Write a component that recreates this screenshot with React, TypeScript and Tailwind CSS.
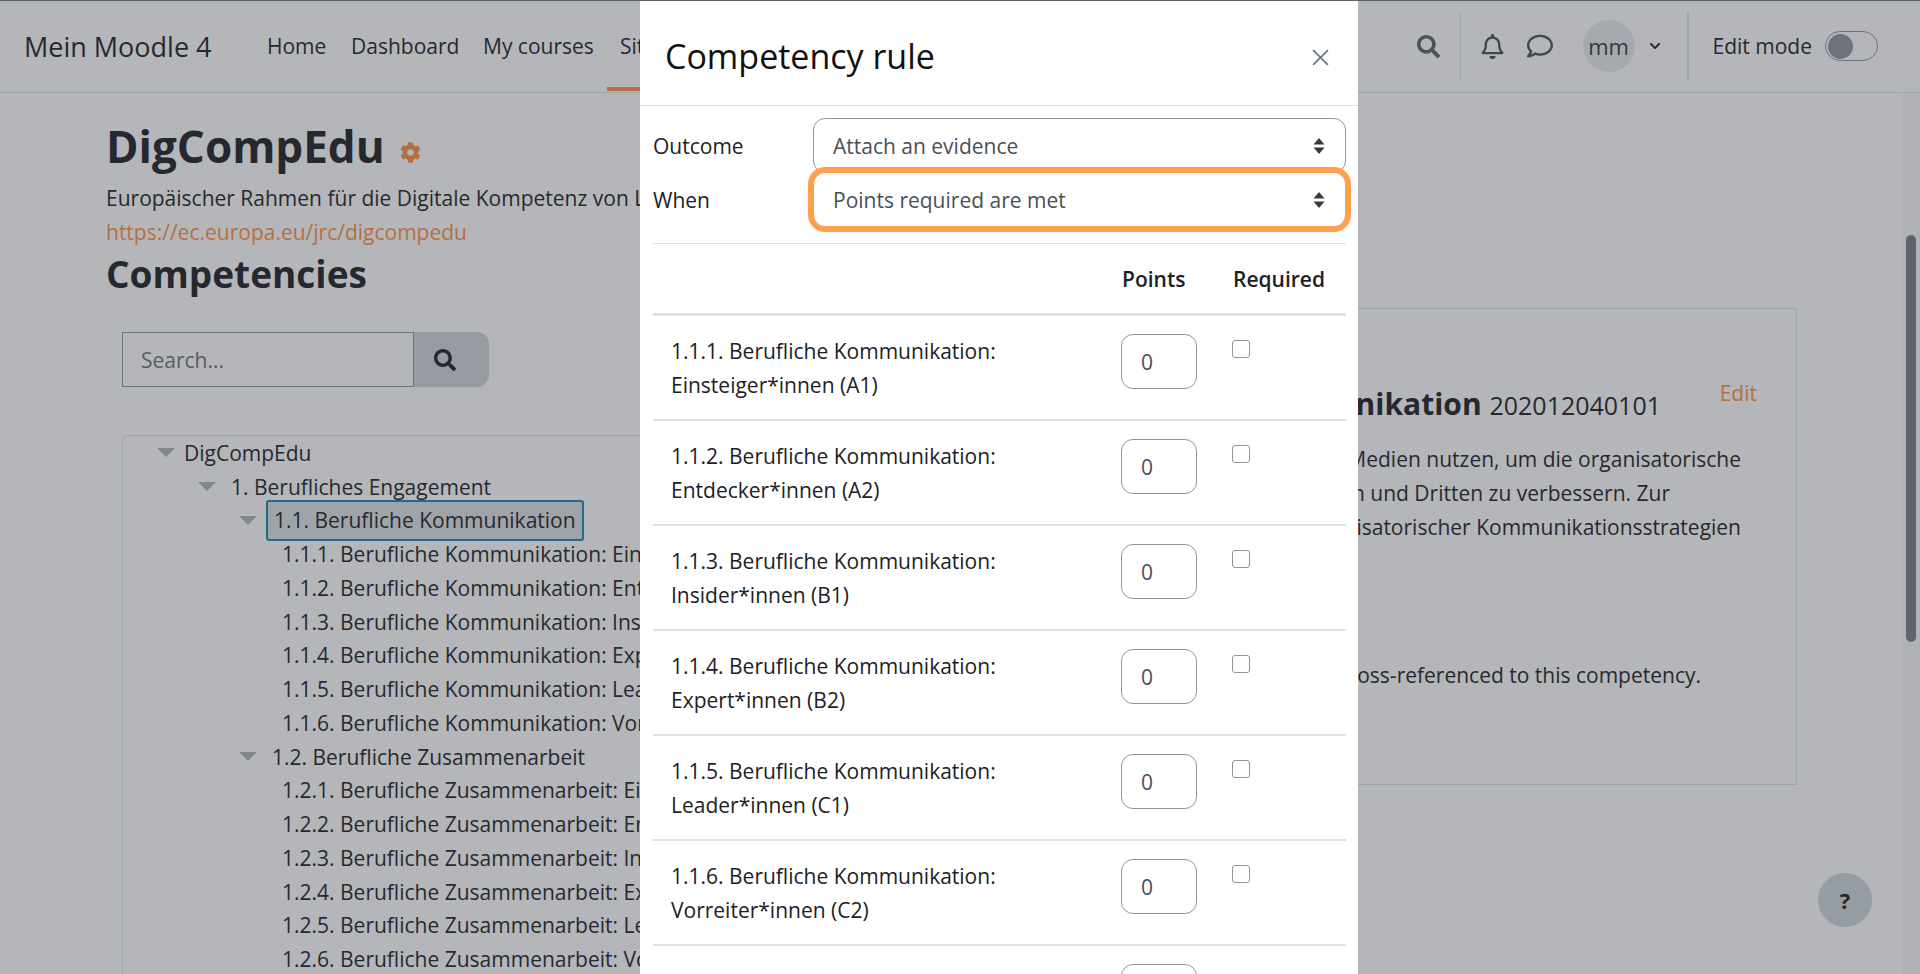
import React from 'react';
import { FaCog, FaSearch, FaRegBell, FaRegComment, FaChevronDown } from 'react-icons/fa';

const tree = [
  { label: 'DigCompEdu', arrow: 'ml-[34px]', text: 'ml-[9px]' },
  { label: '1. Berufliches Engagement', arrow: 'ml-[75px]', text: 'ml-[15px]' },
  { label: '1.1. Berufliche Kommunikation', arrow: 'ml-[116px]', text: 'ml-[9px]', selected: true },
  { label: '1.1.1. Berufliche Kommunikation: Einsteiger*innen (A1)', text: 'ml-[159px]' },
  { label: '1.1.2. Berufliche Kommunikation: Entdecker*innen (A2)', text: 'ml-[159px]' },
  { label: '1.1.3. Berufliche Kommunikation: Insider*innen (B1)', text: 'ml-[159px]' },
  { label: '1.1.4. Berufliche Kommunikation: Expert*innen (B2)', text: 'ml-[159px]' },
  { label: '1.1.5. Berufliche Kommunikation: Leader*innen (C1)', text: 'ml-[159px]' },
  { label: '1.1.6. Berufliche Kommunikation: Vorreiter*innen (C2)', text: 'ml-[159px]' },
  { label: '1.2. Berufliche Zusammenarbeit', arrow: 'ml-[116px]', text: 'ml-[15px]' },
  { label: '1.2.1. Berufliche Zusammenarbeit: Einsteiger*innen (A1)', text: 'ml-[159px]' },
  { label: '1.2.2. Berufliche Zusammenarbeit: Entdecker*innen (A2)', text: 'ml-[159px]' },
  { label: '1.2.3. Berufliche Zusammenarbeit: Insider*innen (B1)', text: 'ml-[159px]' },
  { label: '1.2.4. Berufliche Zusammenarbeit: Expert*innen (B2)', text: 'ml-[159px]' },
  { label: '1.2.5. Berufliche Zusammenarbeit: Leader*innen (C1)', text: 'ml-[159px]' },
  { label: '1.2.6. Berufliche Zusammenarbeit: Vorreiter*innen (C2)', text: 'ml-[159px]' },
];

const rules = [
  ['1.1.1. Berufliche Kommunikation:', 'Einsteiger*innen (A1)'],
  ['1.1.2. Berufliche Kommunikation:', 'Entdecker*innen (A2)'],
  ['1.1.3. Berufliche Kommunikation:', 'Insider*innen (B1)'],
  ['1.1.4. Berufliche Kommunikation:', 'Expert*innen (B2)'],
  ['1.1.5. Berufliche Kommunikation:', 'Leader*innen (C1)'],
  ['1.1.6. Berufliche Kommunikation:', 'Vorreiter*innen (C2)'],
  ['1.1.7. Berufliche Kommunikation:', 'Beispiel'],
];

function SelectArrows() {
  return (
    <svg width="12" height="18" viewBox="0 0 12 18" className="fill-[#343a40]">
      <path d="M6 1 L11.5 7.5 L0.5 7.5 Z" />
      <path d="M6 17 L11.5 10.5 L0.5 10.5 Z" />
    </svg>
  );
}

function FakeSelect({ value, focused }: { value: string; focused?: boolean }) {
  return (
    <div
      className={`flex items-center justify-between h-[55px] w-[533px] pl-[19px] pr-[20px] bg-white rounded-[12px] border text-[#495057] ${
        focused ? 'relative z-10 border-[#ffa04d] ring-[5px] ring-[#ffa04d]' : 'border-[#8f959e]'
      }`}
    >
      <span>{value}</span>
      <SelectArrows />
    </div>
  );
}

function Page() {
  return (
    <div className="h-[974px] overflow-hidden bg-white text-[#1d2125]">
      <nav className="flex items-center h-[93px] border-b border-[#dee2e6]">
        <span className="ml-[24px] w-[243px] text-[27px] leading-none">Mein Moodle 4</span>
        <span className="w-[84px]">Home</span>
        <span className="w-[132px]">Dashboard</span>
        <span className="w-[124px]">My courses</span>
        <span className="self-start h-[91px] flex items-center pt-[4px] px-[13px] border-b-[4px] border-[#ff9147] whitespace-nowrap">
          Site administration
        </span>
        <div className="ml-auto flex items-center h-full">
          <FaSearch className="text-[#5a6269] text-[23px] mr-[20px]" />
          <div className="w-px h-[68px] bg-[#dee2e6] mr-[19px]" />
          <FaRegBell className="text-[#495057] text-[25px] mr-[22px]" />
          <FaRegComment className="text-[#495057] text-[26px] mr-[30px]" />
          <div className="w-[52px] h-[52px] rounded-full bg-[#e9ecef] flex items-center justify-center text-[#343a40] text-[22px]">mm</div>
          <FaChevronDown className="text-[#1d2125] text-[12px] ml-[14px] mr-[26px]" />
          <div className="w-[2px] h-[68px] bg-[#dee2e6] mr-[24px]" />
          <span className="mr-[13px] whitespace-nowrap">Edit mode</span>
          <div className="flex items-center w-[53px] h-[30px] rounded-full border border-[#8f959e] pl-[2px] mr-[42px]">
            <div className="w-[25px] h-[25px] rounded-full bg-[#8d959f]" />
          </div>
        </div>
      </nav>

      <main className="pl-[106px]">
        <div className="flex items-center mt-[21px] h-[64px]">
          <h1 className="text-[44px] font-bold leading-none">DigCompEdu</h1>
          <FaCog className="text-[#ff9147] text-[21px] ml-[15px] mt-[13px]" />
        </div>
        <p className="mt-[6px] whitespace-nowrap">
          Europäischer Rahmen für die Digitale Kompetenz von Lehrenden (DigCompEdu), deutsche Übersetzung — Quelle:
        </p>
        <a className="block mt-[6px] text-[#ff9147]">https://ec.europa.eu/jrc/digcompedu</a>
        <h2 className="text-[37px] font-bold leading-[44px] mt-[6px]">Competencies</h2>

        <div className="flex mt-[36px]">
          <div className="w-[810px] ml-[16px] shrink-0">
            <div className="flex">
              <div className="w-[292px] h-[55px] border border-[#8f959e] pl-[18px] flex items-center text-[#6a737b]">Search...</div>
              <div className="w-[75px] h-[55px] bg-[#ced4da] rounded-r-[12px] flex items-center pl-[20px]">
                <FaSearch className="text-[#1d2125] text-[22px]" />
              </div>
            </div>
            <div className="mt-[48px] border border-[#dee2e6] rounded-[5px] h-[600px]">
              {tree.map((row) => (
                <div key={row.label} className="flex items-center h-[33.75px] whitespace-nowrap">
                  {row.arrow && (
                    <span className={`${row.arrow} w-0 h-0 border-x-[9px] border-x-transparent border-t-[9px] border-t-[#adb5bd]`} />
                  )}
                  <span
                    className={`${row.text} ${
                      row.selected ? 'h-[41px] flex items-center px-[6px] bg-[#dee2e6] border-[2px] border-[#1987bd] rounded-[3px]' : ''
                    }`}
                  >
                    {row.label}
                  </span>
                </div>
              ))}
            </div>
          </div>

          <section className="relative w-[815px] h-[477px] -mt-[24px] ml-[50px] border border-[#dee2e6] whitespace-nowrap">
            <a className="absolute right-[39px] top-[70px] text-[#ff9147]">Edit</a>
            <div className="text-right mt-[74px] mr-[135px] text-[30px] font-bold leading-[42px]">
              1.1. Berufliche Kommunikation <span className="text-[25px] font-normal">202012040101</span>
            </div>
            <div className="mt-[16px] leading-[34px]">
              <div className="text-right mr-[55px]">Digitale Medien nutzen, um die organisatorische</div>
              <div className="text-right mr-[126px]">Kommunikation mit Lernenden, Eltern und Dritten zu verbessern. Zur</div>
              <div className="text-right mr-[55px]">Entwicklung organisatorischer Kommunikationsstrategien</div>
            </div>
            <div className="text-right mr-[95px] mt-[114px] leading-[34px]">No competencies are cross-referenced to this competency.</div>
          </section>
        </div>
      </main>
    </div>
  );
}

function CompetencyRuleModal() {
  return (
    <div className="absolute left-[640px] top-[1px] w-[718px] h-[973px] bg-white overflow-hidden text-[#1d2125]">
      <header className="flex items-center justify-between h-[105px] pt-[6px] border-b border-[#dee2e6] pl-[25px] pr-[29px]">
        <h5 className="text-[34px] text-[#111] leading-none">Competency rule</h5>
        <svg width="17" height="17" viewBox="0 0 16 16" className="mt-[3px] stroke-[#6c757d] stroke-[1.6]">
          <path d="M1 1 L15 15 M15 1 L1 15" />
        </svg>
      </header>

      <div className="pl-[13px] pr-[12px] pt-[12px]">
        <div className="flex items-center justify-between">
          <label>Outcome</label>
          <FakeSelect value="Attach an evidence" />
        </div>
        <div className="flex items-center justify-between -mt-px">
          <label>When</label>
          <FakeSelect value="Points required are met" focused />
        </div>

        <div className="mt-[16px] border-t border-[#dee2e6] h-[73px] flex items-center font-semibold text-[#1d2125] border-b-[3px] border-b-[#dee2e6]">
          <span className="ml-[469px] w-[111px]">Points</span>
          <span>Required</span>
        </div>

        {rules.map(([first, second], i) => (
          <div key={first} className="flex items-start h-[105px] border-b-[2px] border-[#dee2e6] pl-[18px] pt-[18px]">
            <div className={`w-[450px] leading-[34px] whitespace-nowrap ${i === 6 ? 'mt-[4px]' : ''}`}>
              {first}
              <br />
              {second}
            </div>
            <input
              defaultValue="0"
              className="w-[76px] h-[55px] pl-[19px] border border-[#8f959e] rounded-[12px] text-[#495057]"
            />
            {i < 6 && (
              <input
                type="checkbox"
                className="appearance-none w-[18px] h-[18px] mt-[6px] ml-[35px] border border-[#8f959e] rounded-[3px] bg-white"
              />
            )}
          </div>
        ))}
      </div>
    </div>
  );
}

export default function App() {
  return (
    <div className="relative h-[974px] overflow-hidden font-['Open_Sans',sans-serif] text-[21px] leading-[28px]">
      <Page />
      {/* backdrop */}
      <div className="absolute inset-0 bg-[#343a40]/[0.37] border-t border-[#5a6066]" />
      <div className="absolute right-0 top-[93px] bottom-0 w-[18px] bg-black/[0.02]" />
      <div className="absolute right-[4px] top-[235px] h-[407px] w-[10px] rounded-full bg-[#5e666d]" />
      <CompetencyRuleModal />
      <button className="absolute left-[1818px] top-[873px] w-[54px] h-[54px] rounded-full bg-[#969ca3] text-[#23272d] text-[22px] font-bold">
        ?
      </button>
    </div>
  );
}
